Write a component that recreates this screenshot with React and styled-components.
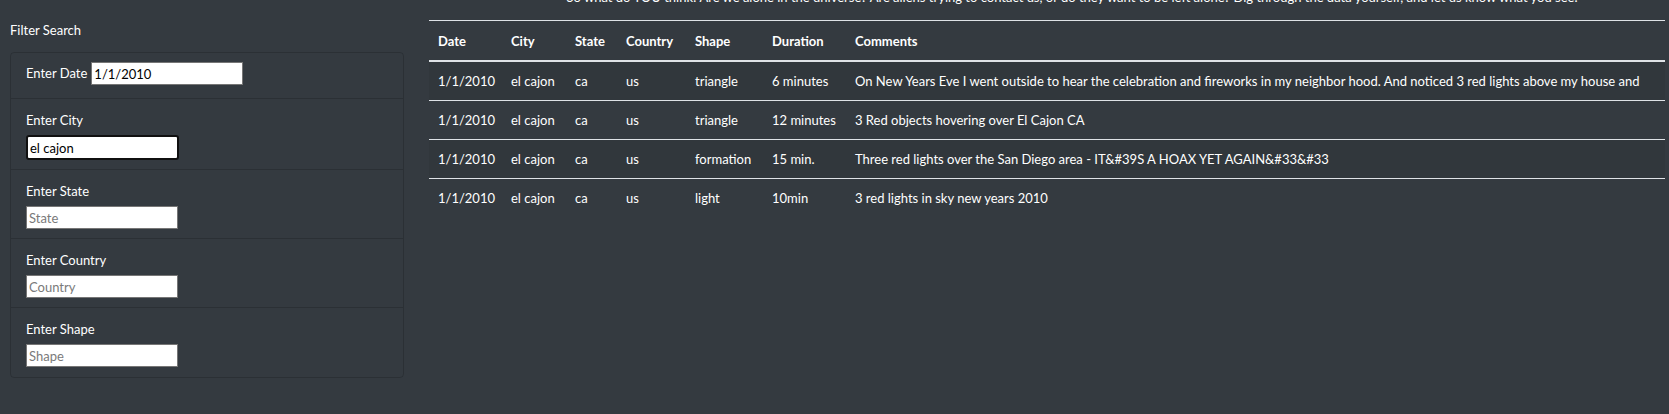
import React from 'react';
import styled, { createGlobalStyle } from 'styled-components';

const GlobalStyle = createGlobalStyle`
    html, body {
        margin: 0;
        padding: 0;
        background-color: #343a40;
    }
    body {
        font-family: "Segoe UI", Lato, "Liberation Sans", sans-serif;
        font-size: 13px;
        color: #ffffff;
        overflow: hidden;
    }
`;

const Page = styled.div`
    display: grid;
    grid-template-columns: 414px 1fr;
    min-height: 414px;
    background-color: #343a40;
`;

const Sidebar = styled.aside`
    padding: 0 10px;
`;

const SideTitle = styled.div`
    margin: 20px 0 11px;
    line-height: 21px;
`;

const Card = styled.ul`
    list-style: none;
    margin: 0;
    padding: 0;
    border: 1px solid rgba(0, 0, 0, 0.16);
    border-radius: 4px;
`;

const Item = styled.li`
    display: flex;
    flex-direction: ${p => (p.$inline ? 'row' : 'column')};
    align-items: ${p => (p.$inline ? 'center' : 'flex-start')};
    gap: 4px;
    padding: ${p => (p.$inline ? '9px 15px 13px' : '11px 15px 9px')};
    border-bottom: 1px solid rgba(0, 0, 0, 0.16);
    &:last-child {
        border-bottom: none;
        padding-bottom: 10px;
    }
`;

const Label = styled.label`
    line-height: 21px;
    color: #ffffff;
`;

const Field = styled.input`
    box-sizing: border-box;
    width: ${p => (p.$focused ? '153px' : '152px')};
    height: ${p => (p.$focused ? '25px' : '23px')};
    padding: 0 2px;
    margin: 0;
    font-family: inherit;
    font-size: 13px;
    color: #000000;
    caret-color: #000000;
    background-color: #ffffff;
    border: ${p => (p.$focused ? '2px solid #101010' : '1px solid #767676')};
    border-radius: ${p => (p.$focused ? '3px' : '0')};
    outline: none;
    &::placeholder {
        color: #7a7a7a;
    }
`;

const Main = styled.main`
    padding: 0 4px 0 15px;
    min-width: 0;
`;

const Intro = styled.p`
    margin: -13px 0 12px;
    padding-left: 50px;
    line-height: 21px;
    text-align: center;
    white-space: nowrap;
`;

const Table = styled.table`
    width: 100%;
    table-layout: fixed;
    border-collapse: collapse;
    border-top: 1px solid #dee2e6;
    color: #ffffff;
`;

const Th = styled.th`
    box-sizing: border-box;
    text-align: left;
    font-weight: 700;
    padding: 9px 9px 8px;
    line-height: 22px;
    border-bottom: 2px solid #dee2e6;
    width: ${p => p.$w || 'auto'};
    white-space: nowrap;
`;

const Row = styled.tr`
    background-color: ${p => (p.$odd ? 'rgba(0, 0, 0, 0.05)' : 'transparent')};
    &:not(:last-child) td {
        border-bottom: 1px solid #dee2e6;
    }
`;

const Td = styled.td`
    padding: 8px 9px;
    line-height: 22px;
    white-space: nowrap;
    overflow: hidden;
`;

const columns = [
    { key: 'date', title: 'Date', w: '73px' },
    { key: 'city', title: 'City', w: '64px' },
    { key: 'state', title: 'State', w: '51px' },
    { key: 'country', title: 'Country', w: '69px' },
    { key: 'shape', title: 'Shape', w: '77px' },
    { key: 'duration', title: 'Duration', w: '83px' },
    { key: 'comments', title: 'Comments' },
];

const sightings = [
    {
        date: '1/1/2010', city: 'el cajon', state: 'ca', country: 'us', shape: 'triangle', duration: '6 minutes',
        comments: 'On New Years Eve I went outside to hear the celebration and fireworks in my neighbor hood. And noticed 3 red lights above my house and',
    },
    {
        date: '1/1/2010', city: 'el cajon', state: 'ca', country: 'us', shape: 'triangle', duration: '12 minutes',
        comments: '3 Red objects hovering over El Cajon CA',
    },
    {
        date: '1/1/2010', city: 'el cajon', state: 'ca', country: 'us', shape: 'formation', duration: '15 min.',
        comments: 'Three red lights over the San Diego area - IT&#39S A HOAX YET AGAIN&#33&#33',
    },
    {
        date: '1/1/2010', city: 'el cajon', state: 'ca', country: 'us', shape: 'light', duration: '10min',
        comments: '3 red lights in sky new years 2010',
    },
];

const filters = [
    { id: 'datetime', label: 'Enter Date', value: '1/1/2010', inline: true },
    { id: 'city', label: 'Enter City', value: 'el cajon', focused: true },
    { id: 'state', label: 'Enter State', placeholder: 'State' },
    { id: 'country', label: 'Enter Country', placeholder: 'Country' },
    { id: 'shape', label: 'Enter Shape', placeholder: 'Shape' },
];

// put the caret after the typed text, like the user just typed it
const caretToEnd = (e) => {
    const len = e.target.value.length;
    e.target.setSelectionRange(len, len);
};

const App = () => {
    return (
        <Page>
            <GlobalStyle />
            <Sidebar>
                <SideTitle>Filter Search</SideTitle>
                <Card>
                    {filters.map(f => (
                        <Item key={f.id} $inline={f.inline}>
                            <Label htmlFor={f.id}>{f.label}</Label>
                            <Field
                                id={f.id}
                                type="text"
                                defaultValue={f.value}
                                placeholder={f.placeholder}
                                autoFocus={f.focused}
                                onFocus={f.focused ? caretToEnd : undefined}
                                $focused={f.focused}
                            />
                        </Item>
                    ))}
                </Card>
            </Sidebar>
            <Main>
                <Intro>
                    So what do YOU think! Are we alone in the universe? Are aliens trying to contact us, or do they want to be left alone? Dig through the data yourself, and let us know what you see.
                </Intro>
                <Table>
                    <thead>
                        <tr>
                            {columns.map(c => (
                                <Th key={c.key} $w={c.w}>{c.title}</Th>
                            ))}
                        </tr>
                    </thead>
                    <tbody>
                        {sightings.map((s, i) => (
                            <Row key={i} $odd={i % 2 === 0}>
                                {columns.map(c => (
                                    <Td key={c.key}>{s[c.key]}</Td>
                                ))}
                            </Row>
                        ))}
                    </tbody>
                </Table>
            </Main>
        </Page>
    );
};

export default App;
